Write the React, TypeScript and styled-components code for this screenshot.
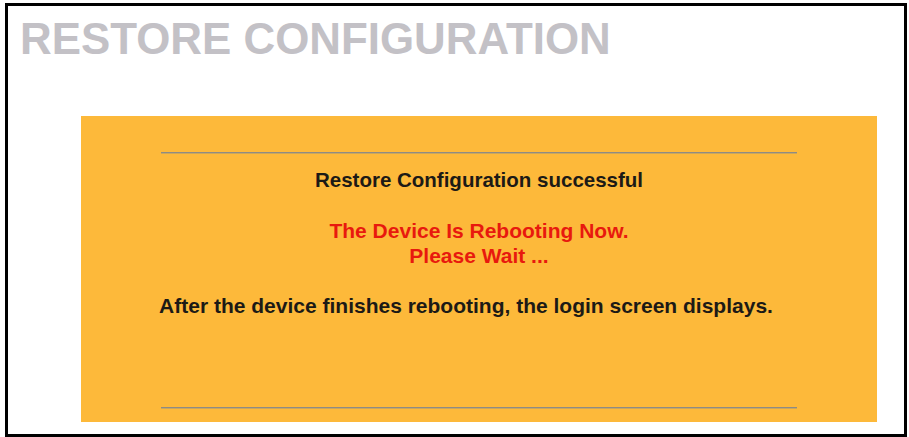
import React from "react";
import styled, { createGlobalStyle } from "styled-components";

const Global = createGlobalStyle`
  html, body { margin: 0; padding: 0; background: #ffffff; }
  body { font-family: "Liberation Sans", Arial, sans-serif; }
`;

const Frame = styled.div`
  box-sizing: border-box;
  margin: 3px 0 0 5px;
  width: 902px;
  height: 434px;
  border: 3px solid #000000;
  background: #ffffff;
  display: flex;
  flex-direction: column;
  overflow: hidden;
`;

const Title = styled.h1`
  margin: 10px 0 0 12px;
  font-family: "Liberation Sans", Arial, sans-serif;
  font-weight: bold;
  font-size: 45px;
  line-height: 45px;
  color: #c3c1c6;
  white-space: nowrap;
  transform: scaleX(0.975);
  transform-origin: left top;
`;

const Panel = styled.div`
  box-sizing: border-box;
  margin: 55px 27px 0 73px;
  height: 306px;
  background: #fdb93a;
  display: flex;
  flex-direction: column;
  align-items: center;
  padding-top: 36px;
`;

const Rule = styled.div<{ $top?: number }>`
  width: 636px;
  height: 0;
  border-top: 1px solid #8e8b84;
  border-bottom: 1px solid #c9a75e;
  margin-top: ${(p) => p.$top ?? 0}px;
`;

const Message = styled.p<{ $color?: string; $top: number; $shift?: number; $size?: number }>`
  margin: ${(p) => p.$top}px ${(p) => (p.$shift ?? 0) * 2}px 0 0;
  font-family: "Liberation Sans", Arial, sans-serif;
  font-weight: bold;
  font-size: ${(p) => p.$size ?? 21}px;
  line-height: 25px;
  color: ${(p) => p.$color ?? "#1c1a16"};
  text-align: center;
  white-space: nowrap;
`;

export default function App() {
  return (
    <>
      <Global />
      <Frame>
        <Title>RESTORE CONFIGURATION</Title>
        <Panel>
          <Rule />
          <Message $top={13} $size={20.5}>
            Restore Configuration successful
          </Message>
          <Message $top={26} $color="#e8190e">
            The Device Is Rebooting Now.
            <br />
            Please Wait ...
          </Message>
          <Message $top={25} $shift={13}>
            After the device finishes rebooting, the login screen displays.
          </Message>
          <Rule $top={89} />
        </Panel>
      </Frame>
    </>
  );
}
